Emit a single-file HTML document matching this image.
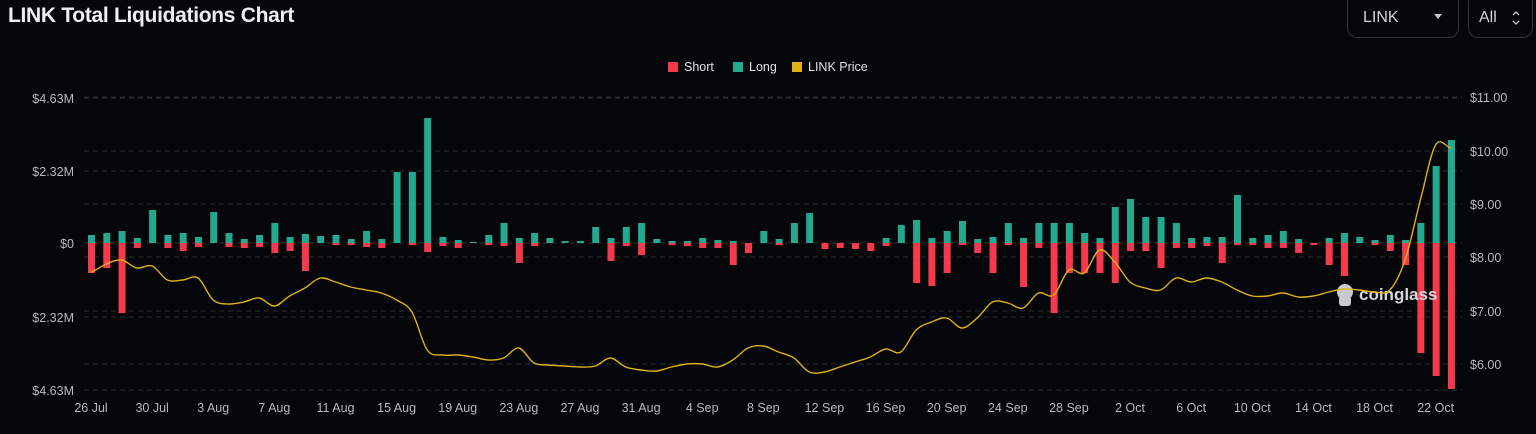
<!DOCTYPE html>
<html><head><meta charset="utf-8"><style>
body{margin:0;background:#05060a;width:1536px;height:434px;overflow:hidden;font-family:"Liberation Sans",sans-serif;}
.t{position:absolute;left:8px;top:4px;color:#eceff3;font-size:21px;font-weight:bold;letter-spacing:-0.3px}
.box{position:absolute;top:-8px;height:46px;border:1px solid #2e3138;border-radius:10px;color:#d4d6da;font-size:16px;box-sizing:border-box}
</style></head><body>
<div class="t">LINK Total Liquidations Chart</div>
<div class="box" style="left:1347px;width:112px"><span style="position:absolute;left:15px;top:16px">LINK</span><span style="position:absolute;left:86px;top:21px;width:0;height:0;border-left:4px solid transparent;border-right:4px solid transparent;border-top:5px solid #c8c9cc"></span></div>
<div class="box" style="left:1468px;width:65px"><span style="position:absolute;left:10px;top:16px">All</span><svg style="position:absolute;left:42px;top:16px" width="10" height="18"><path d="M2 6L5 3L8 6M2 12L5 15L8 12" stroke="#c8c9cc" stroke-width="1.3" fill="none"/></svg></div>
<svg id="c" width="1536" height="434" style="position:absolute;left:0;top:0"></svg>
<script>
var L=[8,10,12,5,33,8,10,6,31,10,4,8,20,6,9,7,8,4,12,4,71,71,125,6,3,1,8,20,5,10,5,2,2,16,5,16,20,4,2,2,5,3,2,0,12,4,20,30,0,0,0,0,5,18,23,5,12,22,4,6,20,5,20,20,20,10,5,36,44,26,26,20,5,6,6,48,5,8,12,4,0,5,10,6,3,8,3,20,77,103];
var S=[30,25,70,5,0,5,8,4,0,4,5,4,10,8,28,0,2,2,4,5,0,2,9,3,5,0,2,3,20,3,0,0,0,0,18,3,12,0,2,3,5,5,22,10,0,2,0,0,6,5,6,8,3,0,40,43,30,2,10,30,2,44,5,70,30,30,30,40,8,8,25,5,5,3,20,2,2,5,5,10,2,22,33,0,2,8,22,110,133,146];
var P=[272,264,260,268,266,280,280,278,300,304,302,298,306,296,288,278,282,287,290,293,300,312,350,355,355,357,360,358,348,363,365,366,367,366,358,367,370,371,367,364,364,367,360,348,346,352,358,372,372,367,362,357,349,352,330,322,318,328,318,302,303,308,293,295,270,273,250,262,282,288,290,278,282,278,282,290,296,296,293,297,296,292,289,290,292,290,260,200,145,148];
var s='',dx=15.28,x0=91;
function line(y,x1,x2){s+='<line x1="'+x1+'" x2="'+x2+'" y1="'+y+'" y2="'+y+'" stroke="#2a2d33" stroke-dasharray="5,4"/>';}
[98,171,243,317,390].forEach(function(y){line(y,84,1462);});
[97,151,204,257,311,364].forEach(function(y){line(y,84,1462);});
var ll=['$4.63M','$2.32M','$0','$2.32M','$4.63M'];[98,171,243,317,390].forEach(function(y,i){s+='<text x="74" y="'+(y+5)+'" text-anchor="end" fill="#b7b9bd" font-size="12.5">'+ll[i]+'</text>';});
var rl=['$11.00','$10.00','$9.00','$8.00','$7.00','$6.00'];[97,151,204,257,311,364].forEach(function(y,i){s+='<text x="1470" y="'+(y+5)+'" fill="#b7b9bd" font-size="12.5">'+rl[i]+'</text>';});
var dl=['26 Jul','30 Jul','3 Aug','7 Aug','11 Aug','15 Aug','19 Aug','23 Aug','27 Aug','31 Aug','4 Sep','8 Sep','12 Sep','16 Sep','20 Sep','24 Sep','28 Sep','2 Oct','6 Oct','10 Oct','14 Oct','18 Oct','22 Oct'];
dl.forEach(function(d,i){s+='<text x="'+(x0+i*4*dx)+'" y="412" text-anchor="middle" fill="#b7b9bd" font-size="12.5">'+d+'</text>';});
for(var i=0;i<90;i++){var x=x0+i*dx-3;
if(L[i])s+='<rect x="'+x+'" y="'+(243-L[i])+'" width="7" height="'+L[i]+'" fill="#23a98f"/>';
if(S[i])s+='<rect x="'+x+'" y="243" width="7" height="'+S[i]+'" fill="#f6394d"/>';}
s+='<g transform="translate(1333,282)" fill="#c9cacc"><circle cx="12" cy="10" r="8"/><rect x="6" y="14" width="12" height="10" rx="3"/></g><text x="1359" y="300" fill="#d6d7d9" font-size="17" font-weight="bold">coinglass</text>';
var d='M'+x0+' '+P[0];
for(var i=0;i<89;i++){var p0=P[Math.max(i-1,0)],p1=P[i],p2=P[i+1],p3=P[Math.min(i+2,89)];var xa=x0+i*dx,xb=xa+dx;
d+=' C'+(xa+dx/3).toFixed(1)+' '+(p1+(p2-p0)/6).toFixed(1)+' '+(xb-dx/3).toFixed(1)+' '+(p2-(p3-p1)/6).toFixed(1)+' '+xb.toFixed(1)+' '+p2;}
s+='<path d="'+d+'" stroke="#e0b113" stroke-width="1.4" fill="none"/>';
s+='<rect x="668" y="62" width="10" height="10" fill="#f6394d"/><text x="684" y="71" fill="#e0e1e3" font-size="12.5">Short</text>';
s+='<rect x="733" y="62" width="10" height="10" fill="#23a98f"/><text x="749" y="71" fill="#e0e1e3" font-size="12.5">Long</text>';
s+='<rect x="792" y="62" width="10" height="10" fill="#e0b113"/><text x="808" y="71" fill="#e0e1e3" font-size="12.5">LINK Price</text>';
document.getElementById('c').innerHTML=s;
</script>
</body></html>
